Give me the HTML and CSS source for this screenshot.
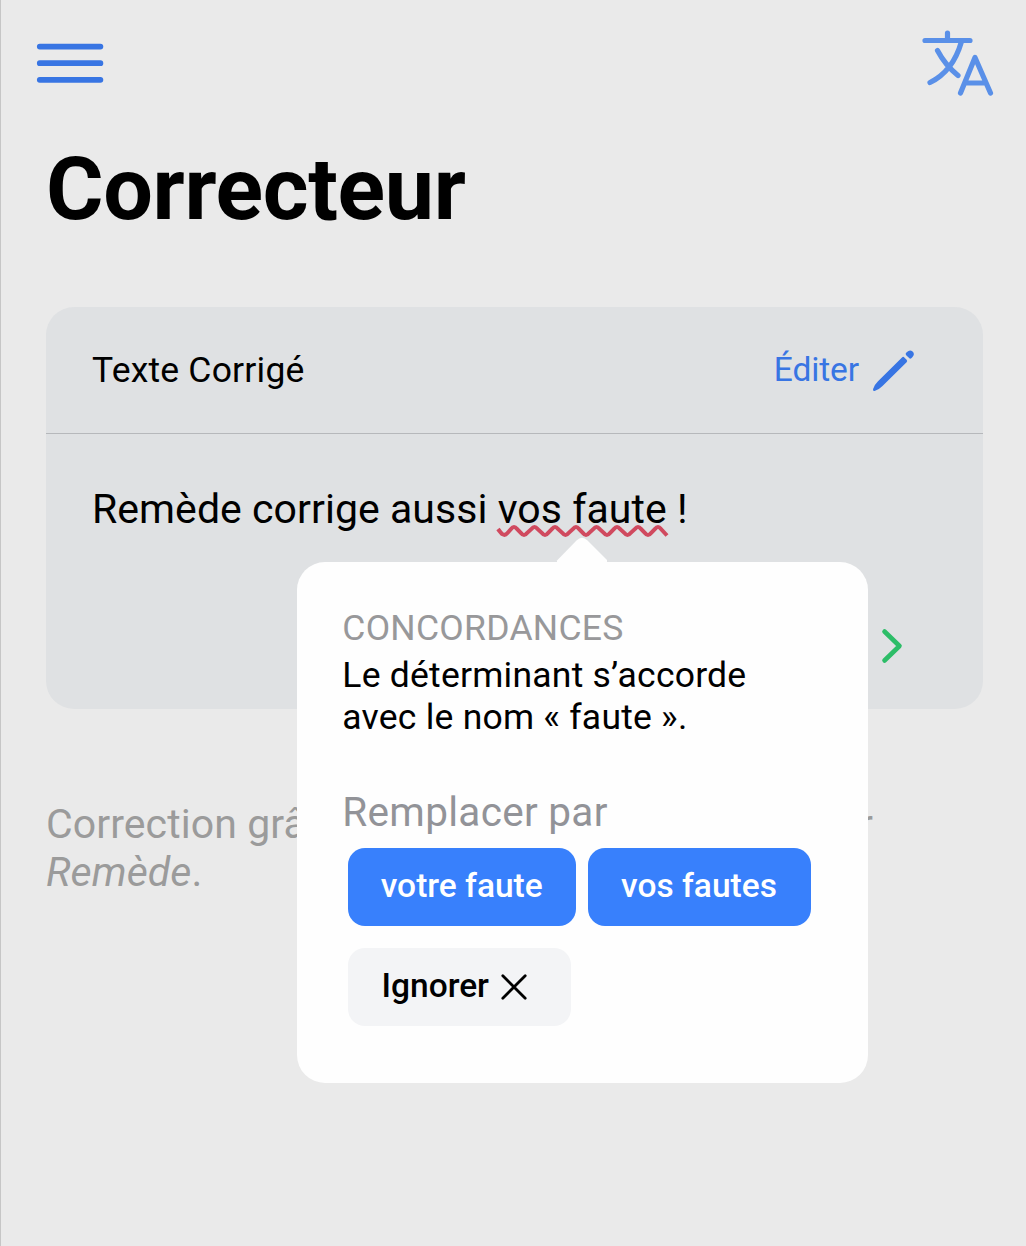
FILE: index.html
```html
<!DOCTYPE html>
<html lang="fr">
<head>
<meta charset="utf-8">
<title>Correcteur</title>
<link rel="stylesheet" href="styles.css">
</head>
<body>
<div class="page">
  <header class="topbar">
    <svg class="menu-icon" viewBox="0 0 68 40" fill="none" stroke="#3875e3" stroke-width="5.8" stroke-linecap="round"><path d="M3.800 3.600H64.400M3.800 20.200H64.400M3.800 36.800H64.400"/></svg>
    <svg class="lang-icon" viewBox="0 0 74 70" fill="none" stroke="#5a90e8" stroke-width="5.2" stroke-linecap="round" stroke-linejoin="round"><path d="M27.500 3V10M5 10.500H50M41.500 11.500C36.500 29 27.500 44 10 52.500M17.500 20.500C23 31 30 39 38 45.500M40.500 63L55 27.500L70.500 63M45.500 53H65.500"/></svg>
  </header>
  <h1 class="title">Correcteur</h1>
  <section class="card">
    <div class="card-head">
      <span class="card-label">Texte Corrigé</span>
      <a class="edit"><span>Éditer</span><svg class="pen-icon" viewBox="0 0 41 41" fill="#3875e3"><path d="M31.300 7.400L33.600 9.700Q34.800 11 33.600 12.200L9.500 36Q5.500 40 1.600 41Q-.6 41.200 .1 39Q1.300 34.800 5 31.200L29 7.400Q30.200 6.300 31.300 7.400Z"/><path d="M34 2Q36.800-.8 39.600 1.500Q42.200 4.200 39.500 7L38.300 8.200Q37.200 9.100 36.100 8.100L33.200 5.200Q32.200 4 33 3Z"/></svg></a>
    </div>
    <div class="card-body">
      <p class="sentence">Remède corrige aussi <span class="mistake">vos faute<svg class="wave" viewBox="0 0 170 14" fill="none" stroke="#d04a5f" stroke-width="4"><path d="M0 5C3.500 10 6 13 9.500 9L13 5Q16 1 19 5L23 9Q26 13 29 9L33.500 5Q36.500 1 39.500 5L44 9Q47 13 50 9L54 5Q57 1 60 5L64.500 9Q67.500 13 70.500 9L75 5Q78 1 81 5L85 9Q88 13 91 9L95.500 5Q98.500 1 101.500 5L106 9Q109 13 112 9L116 5Q119 1 122 5L126.500 9Q129.500 13 132.500 9L137 5Q140 1 143 5L147 9Q150 13 153 9L157 5Q160 1 163 5L169 11.500"/></svg></span> !</p>
      <svg class="next-icon" viewBox="0 0 20 34" fill="none" stroke="#2dbd68" stroke-width="4.600" stroke-linecap="round" stroke-linejoin="round"><path d="M2.500 2.500L17.500 17L2.500 31.500"/></svg>
    </div>
    <div class="popup">
      <svg class="arrow" viewBox="0 0 50 26" fill="#fefefe"><path d="M0 26V23.500L19.500 3.500Q25-2 30.500 3.500L50 23V26Z"/></svg>
      <p class="rule">CONCORDANCES</p>
      <p class="explain">Le déterminant s’accorde<br>avec le nom «&nbsp;faute&nbsp;».</p>
      <p class="replace">Remplacer par</p>
      <div class="actions">
        <button class="btn votre">votre faute</button>
        <button class="btn vos">vos fautes</button>
        <button class="btn ignore">Ignorer<svg class="close-icon" viewBox="0 0 26 26" fill="none" stroke="#000" stroke-width="2.800" stroke-linecap="round"><path d="M1.800 1.800L24.200 24.200M24.200 1.800L1.800 24.200"/></svg></button>
      </div>
    </div>
  </section>
  <p class="note"><span class="note-line"><span>Correction grâce</span><span>r</span></span><em>Remède</em>.</p>
</div>
</body>
</html>
```
FILE: styles.css
```css
* { box-sizing: border-box; }
body { margin: 0; background: #eaeaea; color: #000; font-family: Roboto, sans-serif; }
p, h1 { margin: 0; }
svg { display: block; overflow: visible; }
.page { height: 1246px; overflow: hidden; padding: 30px 43px 0 45px; border-left: 1px solid #c6c6c6; }
.topbar { display: flex; justify-content: space-between; align-items: flex-start; height: 70px; margin: 0 -12px 0 -10px; }
.menu-icon { width: 68px; height: 40px; margin-top: 13px; }
.lang-icon { width: 74px; height: 70px; margin-right: 1px; }
.title { margin-top: 37px; height: 170px; font-size: 88px; line-height: 104px; font-weight: 700; letter-spacing: -.35px; }
.card { position: relative; height: 402px; border-radius: 28px; background: #dfe1e3; }
.card-head { display: flex; justify-content: space-between; align-items: center; height: 127px; padding: 0 69px 0 46px; border-bottom: 1px solid #b6b8bb; }
.card-label { font-size: 35.500px; letter-spacing: .2px; }
.edit { display: flex; align-items: center; gap: 14px; color: #3875e3; font-size: 33.500px; letter-spacing: -.1px; }
.edit span { margin-top: -2px; }
.pen-icon { width: 41px; height: 41px; }
.card-body { display: flex; flex-direction: column; padding: 50px 81px 0 46px; }
.sentence { font-size: 41px; line-height: 50px; letter-spacing: .05px; white-space: nowrap; }
.mistake { position: relative; }
.wave { position: absolute; left: 0; top: 39px; width: 170px; height: 14px; }
.next-icon { width: 20px; height: 34px; margin-top: 95px; align-self: flex-end; }
.popup { position: absolute; left: 250.500px; top: 255px; width: 571.500px; height: 520.500px; padding: 45px 46px 0 45.800px; border-radius: 28px; background: #fefefe; }
.arrow { position: absolute; left: 260px; top: -25px; width: 50px; height: 26px; }
.rule { color: #98989a; font-size: 35.500px; line-height: 42px; letter-spacing: .27px; }
.explain { margin-top: 5px; font-size: 35.500px; line-height: 42px; letter-spacing: .23px; white-space: nowrap; }
.replace { margin-top: 49px; color: #929398; font-size: 40.500px; line-height: 50px; letter-spacing: .3px; }
.actions { display: flex; flex-wrap: wrap; gap: 22px 11.500px; margin: 10.500px 0 0 5.700px; }
.btn { display: flex; align-items: center; justify-content: center; height: 78px; padding: 0 1px 3px 0; border: 0; border-radius: 17px; background: #3880fc; color: #fff; font: 500 33.500px Roboto, sans-serif; white-space: nowrap; }
.votre { width: 228.500px; }
.vos { width: 223px; }
.ignore { width: 223.500px; gap: 12px; padding-right: 11px; background: #f3f4f6; color: #000; }
.close-icon { width: 26px; height: 26px; margin-top: 3px; }
.note { margin-top: 91px; color: #9b9b9b; font-size: 41px; line-height: 48px; letter-spacing: .08px; }
.note-line { display: flex; justify-content: space-between; width: 827px; }
```
